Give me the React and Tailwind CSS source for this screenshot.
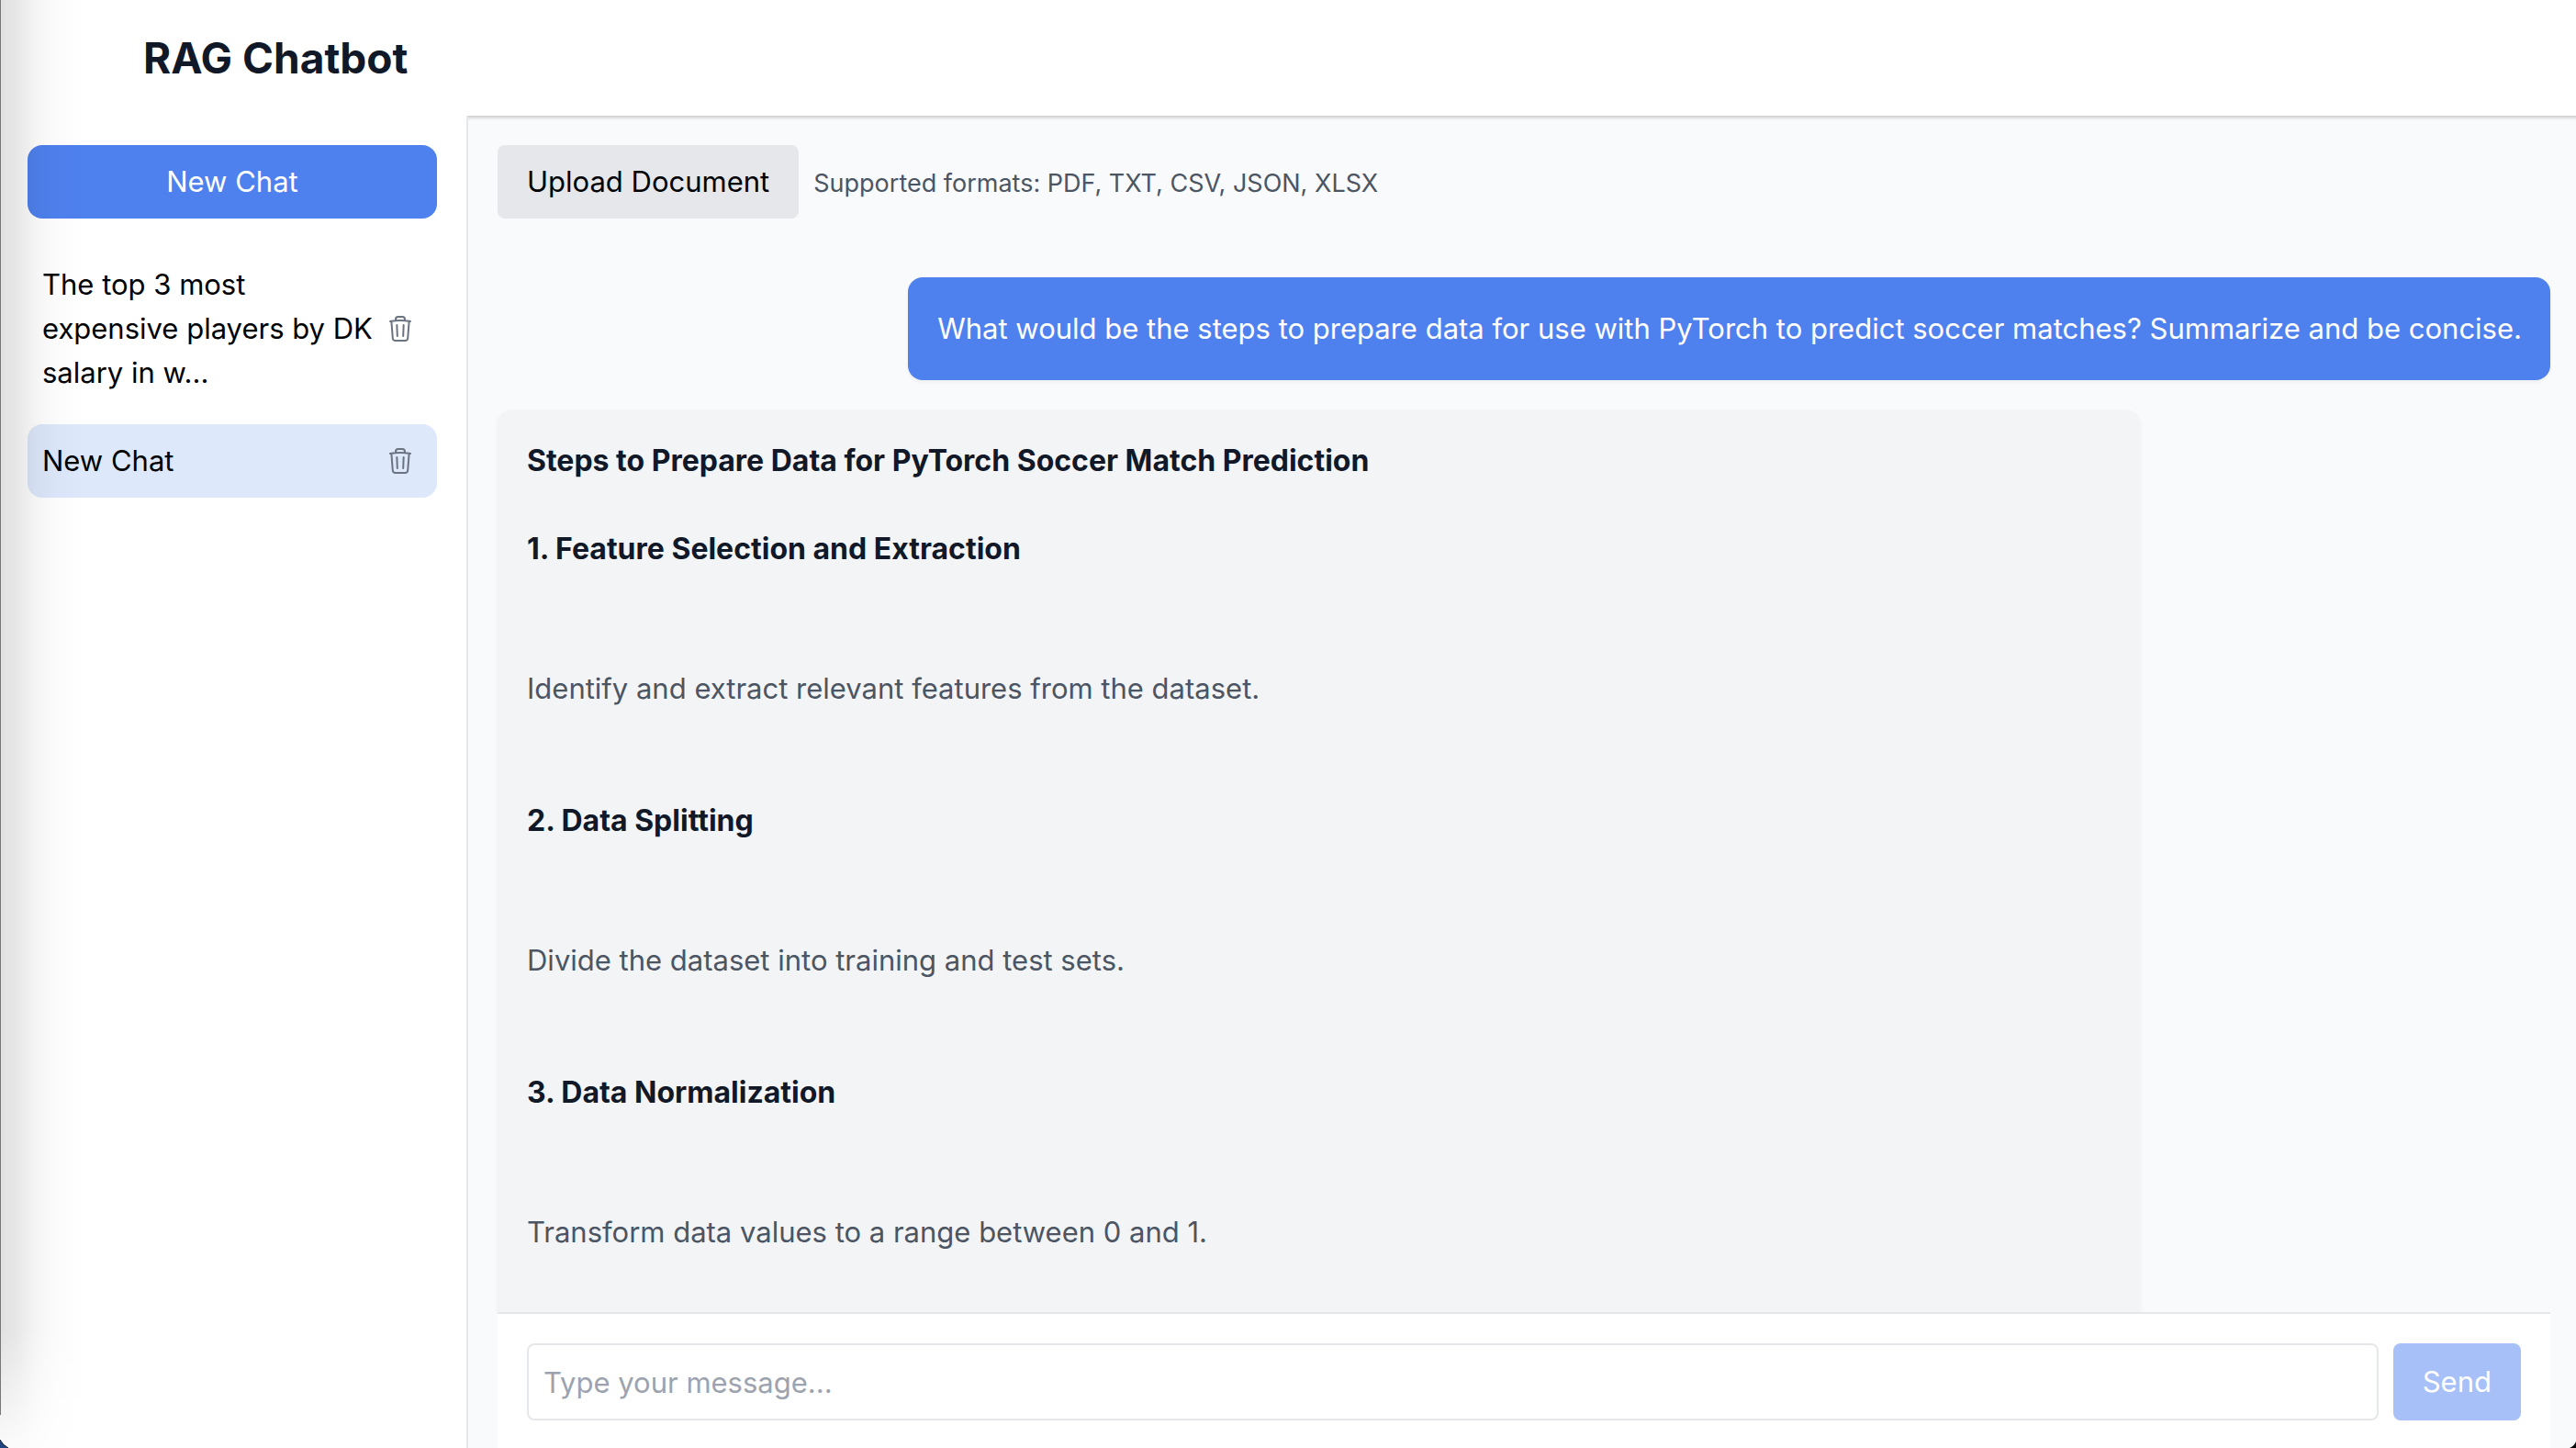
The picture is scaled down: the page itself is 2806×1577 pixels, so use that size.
import { HiOutlineTrash } from "react-icons/hi2";

const chats = [
  { title: "The top 3 most expensive players by DK salary in w...", active: false },
  { title: "New Chat", active: true },
];

const steps = [
  ["1. Feature Selection and Extraction", "Identify and extract relevant features from the dataset."],
  ["2. Data Splitting", "Divide the dataset into training and test sets."],
  ["3. Data Normalization", "Transform data values to a range between 0 and 1."],
];

function ChatItem({ title, active }) {
  return (
    <li className={`flex items-center justify-between rounded-[16px] p-4 ${active ? "bg-[#dde8fb]" : ""}`}>
      <a href="#" className="min-w-0 flex-1">{title}</a>
      <button type="button" aria-label={`Delete ${title}`} className="shrink-0 p-2 text-[#6b7280]">
        <HiOutlineTrash className="size-8" />
      </button>
    </li>
  );
}

export default function App() {
  return (
    <div className="relative flex h-screen flex-col overflow-hidden bg-[#f9fafb] font-['Inter',sans-serif] text-[31px] leading-[48px] text-black">
      <header className="flex h-[126px] shrink-0 items-center bg-white pl-[156px]">
        <h1 className="text-[46px] leading-[64px] font-bold text-[#111827]">RAG Chatbot</h1>
      </header>
      <div className="flex min-h-0 flex-1">
        <aside className="z-10 w-[510px] shrink-0 border-r-2 border-[#e5e7eb] bg-white pt-8 pr-8 pl-[30px]">
          <button type="button" className="h-20 w-full rounded-[16px] bg-[#4f81ee] text-white">New Chat</button>
          <ul className="mt-8 flex flex-col gap-4">
            {chats.map((c) => <ChatItem key={c.title} {...c} />)}
          </ul>
        </aside>
        <main className="flex min-w-0 flex-1 flex-col pr-7 pl-8 shadow-[inset_0_6px_4px_-4px_rgba(0,0,0,0.2)]">
          <div className="flex items-baseline gap-4 pt-8">
            <button type="button" className="h-20 rounded-lg bg-[#e5e7eb] px-8">Upload Document</button>
            <span className="text-[27px] leading-[40px] text-[#4b5563]">Supported formats: PDF, TXT, CSV, JSON, XLSX</span>
          </div>
          <div className="mt-16 flex min-h-0 flex-1 flex-col gap-8">
            <div className="w-4/5 shrink-0 self-end rounded-[16px] bg-[#4f81ee] py-8 pr-4 pl-8 text-white shadow-[0_2px_4px_rgba(0,0,0,0.05)]">
              What would be the steps to prepare data for use with PyTorch to predict soccer matches? Summarize and be concise.
            </div>
            <article className="min-h-0 w-4/5 flex-1 overflow-hidden rounded-t-[16px] bg-[#f3f4f6] px-8 pt-8 text-[#4b5563] shadow-[0_2px_4px_rgba(0,0,0,0.05)]">
              <h2 className="mb-12 text-[32px] leading-[48px] font-bold text-[#111827]">Steps to Prepare Data for PyTorch Soccer Match Prediction</h2>
              {steps.map(([title, body]) => (
                <section key={title} className="mb-24">
                  <h3 className="text-[32px] leading-[48px] font-bold text-[#111827]">{title}</h3>
                  <p className="mt-[104px]">{body}</p>
                </section>
              ))}
            </article>
          </div>
          <form className="flex shrink-0 gap-4 border-t-2 border-[#e5e7eb] bg-white px-8 pt-8 pb-[30px]">
            <input aria-label="Message" placeholder="Type your message..." className="h-[84px] min-w-0 flex-1 rounded-lg border-2 border-[#e5e7eb] bg-white px-4 placeholder:text-[#9ca3af]" />
            <button type="button" className="rounded-lg bg-[#a7c0f7] px-8 text-white">Send</button>
          </form>
        </main>
      </div>
      {/* Window edge: soft shade, hairline and rounded corners */}
      <div className="pointer-events-none absolute inset-y-0 left-0 z-20 w-24 bg-[linear-gradient(to_right,rgba(0,0,0,0.12),rgba(0,0,0,0.09)_20px,rgba(0,0,0,0.04)_40px,rgba(0,0,0,0.015)_60px,transparent_92px)] [mask-image:linear-gradient(to_top,rgba(0,0,0,0.15),black_130px)]" />
      <div className="pointer-events-none absolute top-0 bottom-9 left-0 z-20 w-px bg-[#777]" />
      <svg className="pointer-events-none absolute bottom-0 left-0 z-20 size-[9px]" viewBox="0 0 9 9" aria-hidden="true">
        <path d="M0 0Q3 6 9 9H0Z" fill="#1f4480" />
        <path d="M0 0Q3 6 9 9" fill="none" stroke="#0b1524" strokeWidth="1" />
      </svg>
      <svg className="pointer-events-none absolute right-0 bottom-0 z-20 size-[7px]" viewBox="0 0 7 7" aria-hidden="true">
        <path d="M7 0Q5 5 0 7H7Z" fill="#0a0a0a" />
      </svg>
    </div>
  );
}
